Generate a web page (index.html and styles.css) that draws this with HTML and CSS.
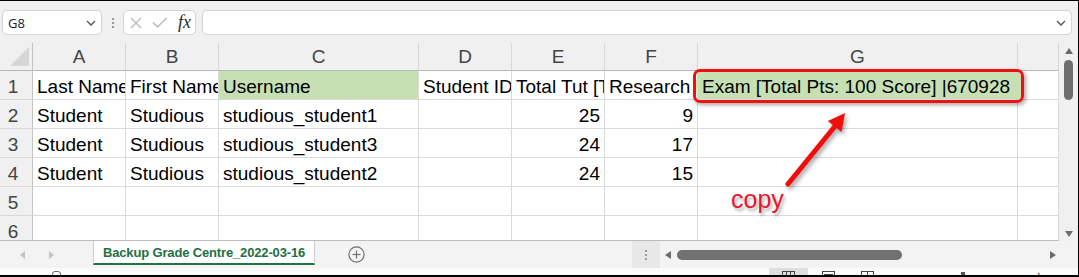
FILE: index.html
```html
<!DOCTYPE html>
<html>
<head>
<meta charset="utf-8">
<link rel="stylesheet" href="styles.css">
</head>
<body>
<div class="app">
  <div class="formula-bar">
    <div class="name-box"><span>G8</span><svg class="chev" width="10" height="6" viewBox="0 0 10 6"><polyline points="1,1 5,5 9,1"/></svg></div>
    <div class="grip"><i></i><i></i><i></i></div>
    <div class="fx-box">
      <svg class="ic-x" width="12" height="12" viewBox="0 0 12 12"><line x1="1" y1="1" x2="11" y2="11"/><line x1="11" y1="1" x2="1" y2="11"/></svg>
      <svg class="ic-ok" width="16" height="11" viewBox="0 0 16 11"><polyline points="1,5.5 5.5,10 15,0.8"/></svg>
      <span class="fx">fx</span>
    </div>
    <div class="formula-input"><svg class="chev" width="10" height="6" viewBox="0 0 10 6"><polyline points="1,1 5,5 9,1"/></svg></div>
  </div>

  <div class="sheet-area">
    <div class="sheet">
      <div class="c h corner"><svg width="33" height="27" viewBox="0 0 33 27"><polygon points="29,4 29,23 10,23"/></svg></div>
      <div class="c h">A</div><div class="c h">B</div><div class="c h">C</div><div class="c h">D</div><div class="c h">E</div><div class="c h">F</div><div class="c h">G</div><div class="c h"></div>

      <div class="c r">1</div>
      <div class="c">Last Name</div><div class="c">First Name</div><div class="c green">Username</div><div class="c">Student ID</div><div class="c">Total Tut [Total Pts: 30 Score]</div><div class="c">Research Essay [Total Pts: 20 Score]</div><div class="c green">Exam [Total Pts: 100 Score] |670928</div><div class="c"></div>

      <div class="c r">2</div>
      <div class="c">Student</div><div class="c">Studious</div><div class="c">studious_student1</div><div class="c"></div><div class="c num">25</div><div class="c num">9</div><div class="c"></div><div class="c"></div>

      <div class="c r">3</div>
      <div class="c">Student</div><div class="c">Studious</div><div class="c">studious_student3</div><div class="c"></div><div class="c num">24</div><div class="c num">17</div><div class="c"></div><div class="c"></div>

      <div class="c r">4</div>
      <div class="c">Student</div><div class="c">Studious</div><div class="c">studious_student2</div><div class="c"></div><div class="c num">24</div><div class="c num">15</div><div class="c"></div><div class="c"></div>

      <div class="c r">5</div>
      <div class="c"></div><div class="c"></div><div class="c"></div><div class="c"></div><div class="c"></div><div class="c"></div><div class="c"></div><div class="c"></div>

      <div class="c r last">6</div>
      <div class="c last"></div><div class="c last"></div><div class="c last"></div><div class="c last"></div><div class="c last"></div><div class="c last"></div><div class="c last"></div><div class="c last"></div>
    </div>
    <div class="vscroll">
      <i class="tri-up"></i>
      <div class="vthumb"></div>
      <div class="grow"></div>
      <i class="tri-down"></i>
    </div>
  </div>

  <div class="tab-bar">
    <div class="nav"><i class="tri-left light"></i><i class="tri-right light"></i></div>
    <div class="tab">Backup Grade Centre_2022-03-16</div>
    <svg class="add" width="17" height="17" viewBox="0 0 17 17"><circle cx="8.5" cy="8.5" r="7.6"/><line x1="8.5" y1="4.5" x2="8.5" y2="12.5"/><line x1="4.5" y1="8.5" x2="12.5" y2="8.5"/></svg>
    <div class="grow"></div>
    <div class="split"><i></i><i></i><i></i></div>
    <div class="hscroll">
      <i class="tri-left dark"></i>
      <div class="hthumb"></div>
      <div class="grow"></div>
      <i class="tri-right dark"></i>
    </div>
  </div>

  <div class="status-bar">
    <div class="st-acc"></div>
    <div class="st-views"><div class="st-icon grid3"><i></i><i></i></div></div>
    <div class="st-icon page"><b></b></div>
    <div class="st-icon grid3 wide"><i></i></div>
    <div class="st-dot"></div>
    <div class="st-zoom">+ 100%</div>
  </div>

  <div class="callout-box"></div>
  <svg class="callout-arrow" width="90" height="100" viewBox="770 100 90 100">
    <line x1="788" y1="184" x2="836" y2="125"/>
    <polygon points="845,113 827.8,121 841.5,132"/>
  </svg>
  <div class="callout-text">copy</div>
</div>
</body>
</html>
```

FILE: styles.css
```css
html, body {
  margin: 0;
  padding: 0;
  background: #fff;
}

.app {
  position: relative;
  width: 1079px;
  height: 277px;
  box-sizing: border-box;
  border-top: 1px solid #000;
  border-right: 1px solid #000;
  border-bottom: 2px solid #000;
  background: #f0f0f0;
  font-family: "Liberation Sans", Arial, sans-serif;
  overflow: hidden;
  display: flex;
  flex-direction: column;
}

/* ---------- formula bar ---------- */
.formula-bar {
  flex: none;
  height: 42px;
  box-sizing: border-box;
  padding: 9px 0 0 2px;
  display: flex;
  align-items: flex-start;
}

.name-box,
.fx-box,
.formula-input {
  height: 25px;
  box-sizing: border-box;
  border: 1px solid #d3d3d3;
  border-radius: 5px;
  background: #fff;
  display: flex;
  align-items: center;
}

.name-box {
  width: 100px;
  justify-content: space-between;
  padding: 0 5px;
  font-family: "Open Sans", "Liberation Sans", sans-serif;
  font-size: 13px;
  color: #1a1a1a;
}

.chev polyline {
  fill: none;
  stroke: #505050;
  stroke-width: 1.3;
}

.grip {
  display: flex;
  flex-direction: column;
  gap: 2px;
  margin: 8px 0 0 10px;
}

.grip i {
  display: block;
  width: 2px;
  height: 2px;
  background: #9a9a9a;
}

.fx-box {
  margin-left: 9px;
  width: 73px;
  padding-left: 6px;
  gap: 10px;
}

.ic-x line,
.ic-ok polyline {
  fill: none;
  stroke: #b9b9b9;
  stroke-width: 1.3;
}

.fx {
  font-family: "Liberation Serif", serif;
  font-style: italic;
  font-size: 18px;
  color: #2b2b2b;
  line-height: 1;
  margin-top: -2px;
}

.formula-input {
  margin-left: 6px;
  width: 870px;
  justify-content: flex-end;
  padding-right: 5px;
}

/* ---------- sheet ---------- */
.sheet-area {
  flex: none;
  height: 198px;
  display: flex;
}

.sheet {
  width: 1059px;
  display: grid;
  grid-template-columns: 33px 93px 93px 200px 93px 93px 93px 320px 41px;
  grid-template-rows: 28px repeat(5, 29px) 24px;
  border-bottom: 1px solid #bdbdbd;
  background: #fff;
}

.c {
  box-sizing: border-box;
  border-right: 1px solid #dadada;
  border-bottom: 1px solid #dadada;
  overflow: hidden;
  white-space: nowrap;
  font-size: 19px;
  line-height: 27px;
  padding: 2px 4px 0 4px;
  color: #000;
}

.c.last {
  border-bottom: none;
}

.c.num {
  text-align: right;
}

.c.green {
  background: #c6e0b4;
}

.c.h {
  background: #f0f0f0;
  color: #444;
  text-align: center;
  padding: 0;
  border-right-color: #d8d8d8;
  border-bottom: 1px solid #b8b8b8;
}

.c.corner {
  border-right-color: #c4c4c4;
}

.corner svg {
  display: block;
}

.corner polygon {
  fill: #d6d6d6;
}

.c.r {
  background: #f0f0f0;
  color: #444;
  text-align: center;
  padding: 2px 6px 0 0;
  border-right: 1px solid #c4c4c4;
  border-bottom-color: #d8d8d8;
}

/* ---------- vertical scrollbar ---------- */
.vscroll {
  width: 19px;
  display: flex;
  flex-direction: column;
  align-items: center;
  background: #f0f0f0;
}

.grow {
  flex: 1;
}

.tri-up,
.tri-down,
.tri-left,
.tri-right {
  display: block;
  width: 0;
  height: 0;
}

.tri-up {
  margin-top: 5px;
  border-left: 4px solid transparent;
  border-right: 4px solid transparent;
  border-bottom: 6px solid #6b6b6b;
}

.tri-down {
  margin-bottom: 4px;
  border-left: 4px solid transparent;
  border-right: 4px solid transparent;
  border-top: 6px solid #6b6b6b;
}

.vthumb {
  margin-top: 6px;
  width: 9px;
  height: 40px;
  border-radius: 5px;
  background: #6e6e6e;
}

/* ---------- tab bar ---------- */
.tab-bar {
  flex: none;
  height: 27px;
  display: flex;
  align-items: center;
  background: #f3f3f3;
}

.nav {
  width: 93px;
  box-sizing: border-box;
  padding-left: 20px;
  display: flex;
  align-items: center;
  gap: 24px;
}

.tri-left {
  border-top: 4px solid transparent;
  border-bottom: 4px solid transparent;
  border-right: 5px solid #c3c3c3;
}

.tri-right {
  border-top: 4px solid transparent;
  border-bottom: 4px solid transparent;
  border-left: 5px solid #c3c3c3;
}

.tri-left.dark {
  border-right: 6px solid #6b6b6b;
  border-top-width: 4.5px;
  border-bottom-width: 4.5px;
}

.tri-right.dark {
  border-left: 6px solid #6b6b6b;
  border-top-width: 4.5px;
  border-bottom-width: 4.5px;
}

.tab {
  align-self: flex-start;
  width: 222px;
  height: 24px;
  box-sizing: border-box;
  background: #fff;
  border-left: 1px solid #cdcdcd;
  border-right: 1px solid #cdcdcd;
  border-bottom: 2px solid #217346;
  display: flex;
  align-items: center;
  justify-content: center;
  font-weight: bold;
  font-size: 13px;
  letter-spacing: -0.15px;
  color: #1e6f42;
  padding-top: 1px;
}

.add {
  margin-left: 33px;
}

.add circle,
.add line {
  fill: none;
  stroke: #707070;
  stroke-width: 1.2;
}

.split {
  align-self: stretch;
  width: 28px;
  background: #e8e8e8;
  display: flex;
  flex-direction: column;
  align-items: center;
  justify-content: center;
  gap: 2px;
}

.split i {
  display: block;
  width: 2px;
  height: 2px;
  background: #9d9d9d;
}

.hscroll {
  width: 418px;
  display: flex;
  align-items: center;
}

.hscroll .tri-left {
  margin-left: 5px;
}

.hthumb {
  margin-left: 6px;
  width: 225px;
  height: 10px;
  border-radius: 5px;
  background: #717171;
}

.hscroll .tri-right {
  margin-right: 22px;
}

/* ---------- status bar ---------- */
.status-bar {
  flex: none;
  height: 7px;
  background: #fafafa;
  display: flex;
  align-items: flex-start;
  overflow: hidden;
}

.st-acc {
  margin: 3px 0 0 52px;
  width: 9px;
  height: 8px;
  box-sizing: border-box;
  border: 1px solid #6a6a6a;
  border-radius: 3px 3px 0 0;
}

.st-views {
  margin-left: 708px;
  width: 40px;
  height: 7px;
  background: #dedede;
  display: flex;
  padding-left: 13px;
  box-sizing: border-box;
}

.st-icon {
  margin-top: 3px;
  width: 13px;
  height: 8px;
  box-sizing: border-box;
  border: 1px solid #444;
  display: flex;
  justify-content: space-evenly;
}

.st-icon i {
  display: block;
  width: 1px;
  background: #444;
}

.st-icon.page {
  margin-left: 14px;
  align-items: flex-end;
  justify-content: center;
}

.st-icon.page b {
  display: block;
  width: 7px;
  height: 3px;
  border: 1px solid #444;
  border-bottom: none;
}

.st-icon.wide {
  margin-left: 26px;
  width: 14px;
}

.st-dot {
  margin: 4px 0 0 87px;
  width: 4px;
  height: 4px;
  background: #555;
}

.st-zoom {
  margin: 1px 0 0 70px;
  font-size: 13px;
  line-height: 13px;
  color: #333;
}

/* ---------- callout ---------- */
.callout-box {
  position: absolute;
  left: 693px;
  top: 68px;
  width: 331px;
  height: 34px;
  box-sizing: border-box;
  border: 3px solid #ee1111;
  border-radius: 7px;
  box-shadow: 2px 2px 4px rgba(0, 0, 0, 0.35), inset -4px 0 0 #c6e0b4;
}

.callout-arrow {
  position: absolute;
  left: 770px;
  top: 99px;
  overflow: visible;
  filter: drop-shadow(2px 3px 2px rgba(0, 0, 0, 0.35));
}

.callout-arrow line {
  stroke: #f20d0d;
  stroke-width: 5;
  stroke-linecap: round;
}

.callout-arrow polygon {
  fill: #f20d0d;
}

.callout-text {
  position: absolute;
  left: 731px;
  top: 186px;
  font-family: "Liberation Sans", Arial, sans-serif;
  font-size: 25px;
  line-height: 25px;
  color: #e3172d;
  text-shadow: 2px 3px 3px rgba(0, 0, 0, 0.3);
}
```
